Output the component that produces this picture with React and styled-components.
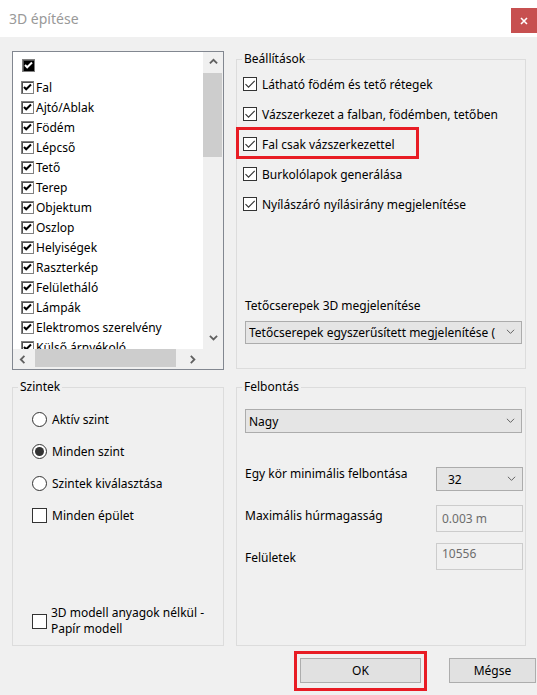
import React from 'react';
import styled, { createGlobalStyle } from 'styled-components';

const GlobalStyle = createGlobalStyle`
  html, body { margin: 0; padding: 0; background: #f0f0f0; overflow: hidden; }
  body {
    font-family: "Noto Sans", "Open Sans", sans-serif;
    font-size: 12px;
    color: #000;
  }
  * { box-sizing: border-box; }
`;

const Window = styled.div`
  width: 537px;
  height: 695px;
  background: #f0f0f0;
  overflow: hidden;
  display: flex;
  flex-direction: column;
`;

const TitleBar = styled.div`
  height: 37px;
  background: #fff;
  display: flex;
  align-items: flex-start;
`;

const Title = styled.div`
  font-size: 14px;
  line-height: 20px;
  color: #999;
  padding: 9px 0 0 9px;
`;

const CloseButton = styled.div`
  flex: none;
  margin: 8px 0 0 auto;
  width: 26px;
  height: 25px;
  background: #c75050;
  display: flex;
  align-items: center;
  justify-content: center;
`;

const Content = styled.div`
  display: grid;
  grid-template-columns: 212px 290px;
  column-gap: 12px;
  align-items: start;
  padding: ${p => p.$top}px 0 0 12px;
`;

/* ---------- list box ---------- */

const ListBox = styled.div`
  height: 319px;
  border: 1px solid #828790;
  background: #fff;
  display: grid;
  grid-template-columns: 1fr 20px;
  grid-template-rows: 1fr 20px;
`;

const ListItems = styled.div`
  overflow: hidden;
  padding-top: 2px;
`;

const ListRow = styled.div`
  height: ${p => (p.$head ? 23 : 20)}px;
  display: flex;
  align-items: center;
  gap: 2px;
  padding-left: ${p => (p.$head ? 9 : 8)}px;
  white-space: nowrap;
`;

const ClassicBox = styled.span`
  width: 13px;
  height: 13px;
  flex: none;
  border: 1px solid #808080;
  box-shadow: inset 1px 1px 0 #505050;
  background: ${p => (p.$dark ? '#000' : '#fff')};
  display: flex;
  align-items: center;
  justify-content: center;
`;

const VScroll = styled.div`
  background: #f0f0f0;
  display: flex;
  flex-direction: column;
  align-items: stretch;
`;

const HScroll = styled.div`
  background: #f0f0f0;
  display: flex;
  align-items: stretch;
`;

const Corner = styled.div`
  background: #f0f0f0;
`;

const ArrowCell = styled.div`
  flex: none;
  width: ${p => (p.$h ? '20px' : 'auto')};
  height: ${p => (p.$h ? 'auto' : '21px')};
  display: flex;
  align-items: center;
  justify-content: center;
`;

const Thumb = styled.div`
  background: #cdcdcd;
  flex: none;
  width: ${p => (p.$h ? '141px' : 'auto')};
  height: ${p => (p.$h ? 'auto' : '84px')};
  margin: ${p => (p.$h ? '0 0 2px 2px' : '0 1px 0 0')};
`;

const Spacer = styled.div`
  flex: 1;
`;

/* ---------- group boxes ---------- */

const Group = styled.fieldset`
  margin: 0;
  min-width: 0;
  height: ${p => p.$h}px;
  border: 1px solid #dcdcdc;
  padding: 0;
`;

const Legend = styled.legend`
  margin-left: 5px;
  padding: 0 2px;
  line-height: 16px;
`;

const Option = styled.div`
  position: relative;
  height: 20px;
  display: flex;
  align-items: center;
  gap: 5px;
  padding-left: 6px;
  white-space: nowrap;
  margin-bottom: 10px;
  &:first-of-type { margin-top: 7px; }
`;

const FlatBox = styled.span`
  width: ${p => p.$size || 14}px;
  height: ${p => p.$size || 14}px;
  flex: none;
  border: 1px solid #333;
  background: #fff;
  display: flex;
  align-items: center;
  justify-content: center;
`;

const Highlight = styled.span`
  position: absolute;
  left: -1px;
  top: -7px;
  width: 183px;
  height: 32px;
  border: 3px solid #e81c24;
  pointer-events: none;
`;

const Section = styled.div`
  padding: 0 3px 0 8px;
  margin-top: ${p => p.$mt || 0}px;
`;

const Caption = styled.div`
  line-height: 16px;
  margin-bottom: 7px;
  white-space: nowrap;
`;

const Select = styled.div`
  height: ${p => p.$h || 24}px;
  width: ${p => (p.$w ? `${p.$w}px` : 'auto')};
  background: #e5e5e5;
  border: 1px solid #acacac;
  display: flex;
  align-items: center;
  padding-left: ${p => (p.$w ? 11 : 3)}px;
`;

const SelectText = styled.span`
  overflow: hidden;
  white-space: nowrap;
  flex: ${p => (p.$clip ? 'none' : 1)};
  width: ${p => (p.$clip ? '250px' : 'auto')};
`;

const Chevron = styled.span`
  flex: none;
  width: 22px;
  display: flex;
  justify-content: center;
`;

const Radio = styled.span`
  width: 15px;
  height: 15px;
  flex: none;
  border: 1px solid #333;
  border-radius: 50%;
  background: #fff;
  display: flex;
  align-items: center;
  justify-content: center;
  &::after {
    content: '';
    display: ${p => (p.$on ? 'block' : 'none')};
    width: 9px;
    height: 9px;
    border-radius: 50%;
    background: #333;
  }
`;

const LevelRow = styled.div`
  height: 20px;
  display: flex;
  align-items: center;
  gap: 5px;
  padding-left: 19px;
  margin-top: ${p => p.$mt}px;
  white-space: nowrap;
`;

const PaperRow = styled.div`
  display: flex;
  align-items: center;
  gap: 4px;
  padding-left: 19px;
  margin-top: 80px;
  line-height: 16px;
`;

const FieldRow = styled.div`
  display: grid;
  grid-template-columns: 1fr 87px;
  align-items: start;
  padding: 0 2px 0 8px;
  margin-top: ${p => p.$mt}px;
`;

const FieldLabel = styled.div`
  line-height: 16px;
  margin-top: ${p => p.$off}px;
  white-space: nowrap;
`;

const ReadOnly = styled.div`
  height: 27px;
  border: 1px solid #cccccc;
  background: #f0f0f0;
  color: #6d6d6d;
  padding: ${p => (p.$top ? '2px' : '5px')} 0 0 5px;
  line-height: 16px;
`;

/* ---------- buttons ---------- */

const ButtonBar = styled.div`
  display: flex;
  justify-content: flex-end;
  gap: 28px;
  padding: 12px 1px 0 0;
`;

const ButtonWrap = styled.div`
  position: relative;
`;

const Button = styled.div`
  width: ${p => p.$w}px;
  height: 25px;
  background: #e1e1e1;
  border: 1px solid #adadad;
  display: flex;
  align-items: center;
  justify-content: center;
`;

const ButtonFrame = styled.span`
  position: absolute;
  left: -6px;
  top: -7px;
  right: -6px;
  bottom: -8px;
  border: 3px solid #e81c24;
  pointer-events: none;
`;

/* ---------- icons ---------- */

const ClassicCheck = ({ color = '#000' }) => (
  <svg width="9" height="9" viewBox="0 0 9 9">
    <path d="M1 4 L3.2 6.3 L8 1.5" fill="none" stroke={color} strokeWidth="2" />
  </svg>
);

const FlatCheck = () => (
  <svg width="12" height="12" viewBox="0 0 12 12">
    <path d="M1.5 6.2 L4.5 9.2 L10.7 2.8" fill="none" stroke="#333" strokeWidth="1.1" />
  </svg>
);

const ChevronIcon = ({ dir = 'down', size = 9, color = '#606060', width = 2 }) => {
  const paths = {
    up: 'M1 6 L5 2 L9 6',
    down: 'M1 2 L5 6 L9 2',
    left: 'M6 1 L2 5 L6 9',
    right: 'M2 1 L6 5 L2 9',
  };
  return (
    <svg width={size} height={size} viewBox="0 0 10 10">
      <path d={paths[dir]} fill="none" stroke={color} strokeWidth={width} />
    </svg>
  );
};

const CloseIcon = () => (
  <svg width="8" height="8" viewBox="0 0 8 8">
    <path d="M1 1 L7 7 M7 1 L1 7" stroke="#fff" strokeWidth="1.6" />
  </svg>
);

const layers = [
  'Fal', 'Ajtó/Ablak', 'Födém', 'Lépcső', 'Tető', 'Terep', 'Objektum', 'Oszlop',
  'Helyiségek', 'Raszterkép', 'Felületháló', 'Lámpák', 'Elektromos szerelvény', 'Külső árnyékoló',
];

const settings = [
  'Látható födém és tető rétegek',
  'Vázszerkezet a falban, födémben, tetőben',
  'Fal csak vázszerkezettel',
  'Burkolólapok generálása',
  'Nyílászáró nyílásirány megjelenítése',
];

const App = () => (
  <Window>
    <GlobalStyle />
    <TitleBar>
      <Title>3D építése</Title>
      <CloseButton><CloseIcon /></CloseButton>
    </TitleBar>

    <Content $top={14}>
      <ListBox>
        <ListItems>
          <ListRow $head>
            <ClassicBox $dark><ClassicCheck color="#fff" /></ClassicBox>
          </ListRow>
          {layers.map(name => (
            <ListRow key={name}>
              <ClassicBox><ClassicCheck /></ClassicBox>
              <span>{name}</span>
            </ListRow>
          ))}
        </ListItems>
        <VScroll>
          <ArrowCell><ChevronIcon dir="up" /></ArrowCell>
          <Thumb />
          <Spacer />
          <ArrowCell><ChevronIcon dir="down" /></ArrowCell>
        </VScroll>
        <HScroll>
          <ArrowCell $h><ChevronIcon dir="left" /></ArrowCell>
          <Thumb $h />
          <Spacer />
          <ArrowCell $h><ChevronIcon dir="right" /></ArrowCell>
        </HScroll>
        <Corner />
      </ListBox>

      <Group $h={318}>
        <Legend>Beállítások</Legend>
        {settings.map((label, i) => (
          <Option key={label}>
            {i === 2 && <Highlight />}
            <FlatBox><FlatCheck /></FlatBox>
            <span>{label}</span>
          </Option>
        ))}
        <Section $mt={84}>
          <Caption>Tetőcserepek 3D megjelenítése</Caption>
          <Select $h={23}>
            <SelectText $clip>Tetőcserepek egyszerűsített megjelenítése (</SelectText>
            <Spacer />
            <Chevron><ChevronIcon size={9} color="#555" width={1} /></Chevron>
          </Select>
        </Section>
      </Group>
    </Content>

    <Content $top={9}>
      <Group $h={267}>
        <Legend>Szintek</Legend>
        <LevelRow $mt={14}><Radio /><span>Aktív szint</span></LevelRow>
        <LevelRow $mt={12}><Radio $on /><span>Minden szint</span></LevelRow>
        <LevelRow $mt={12}><Radio /><span>Szintek kiválasztása</span></LevelRow>
        <LevelRow $mt={12}><FlatBox $size={15} /><span>Minden épület</span></LevelRow>
        <PaperRow>
          <FlatBox $size={15} />
          <span>3D modell anyagok nélkül -<br />Papír modell</span>
        </PaperRow>
      </Group>

      <Group $h={267}>
        <Legend>Felbontás</Legend>
        <Section $mt={14}>
          <Select>
            <SelectText>Nagy</SelectText>
            <Chevron><ChevronIcon size={9} color="#555" width={1} /></Chevron>
          </Select>
        </Section>
        <FieldRow $mt={34}>
          <FieldLabel $off={-1}>Egy kör minimális felbontása</FieldLabel>
          <Select $w={87}>
            <SelectText>32</SelectText>
            <Chevron><ChevronIcon size={9} color="#555" width={1} /></Chevron>
          </Select>
        </FieldRow>
        <FieldRow $mt={14}>
          <FieldLabel $off={3}>Maximális húrmagasság</FieldLabel>
          <ReadOnly>0.003 m</ReadOnly>
        </FieldRow>
        <FieldRow $mt={11}>
          <FieldLabel $off={7}>Felületek</FieldLabel>
          <ReadOnly $top>10556</ReadOnly>
        </FieldRow>
      </Group>
    </Content>

    <ButtonBar>
      <ButtonWrap>
        <Button $w={121}>OK</Button>
        <ButtonFrame />
      </ButtonWrap>
      <Button $w={87}>Mégse</Button>
    </ButtonBar>
  </Window>
);

export default App;
